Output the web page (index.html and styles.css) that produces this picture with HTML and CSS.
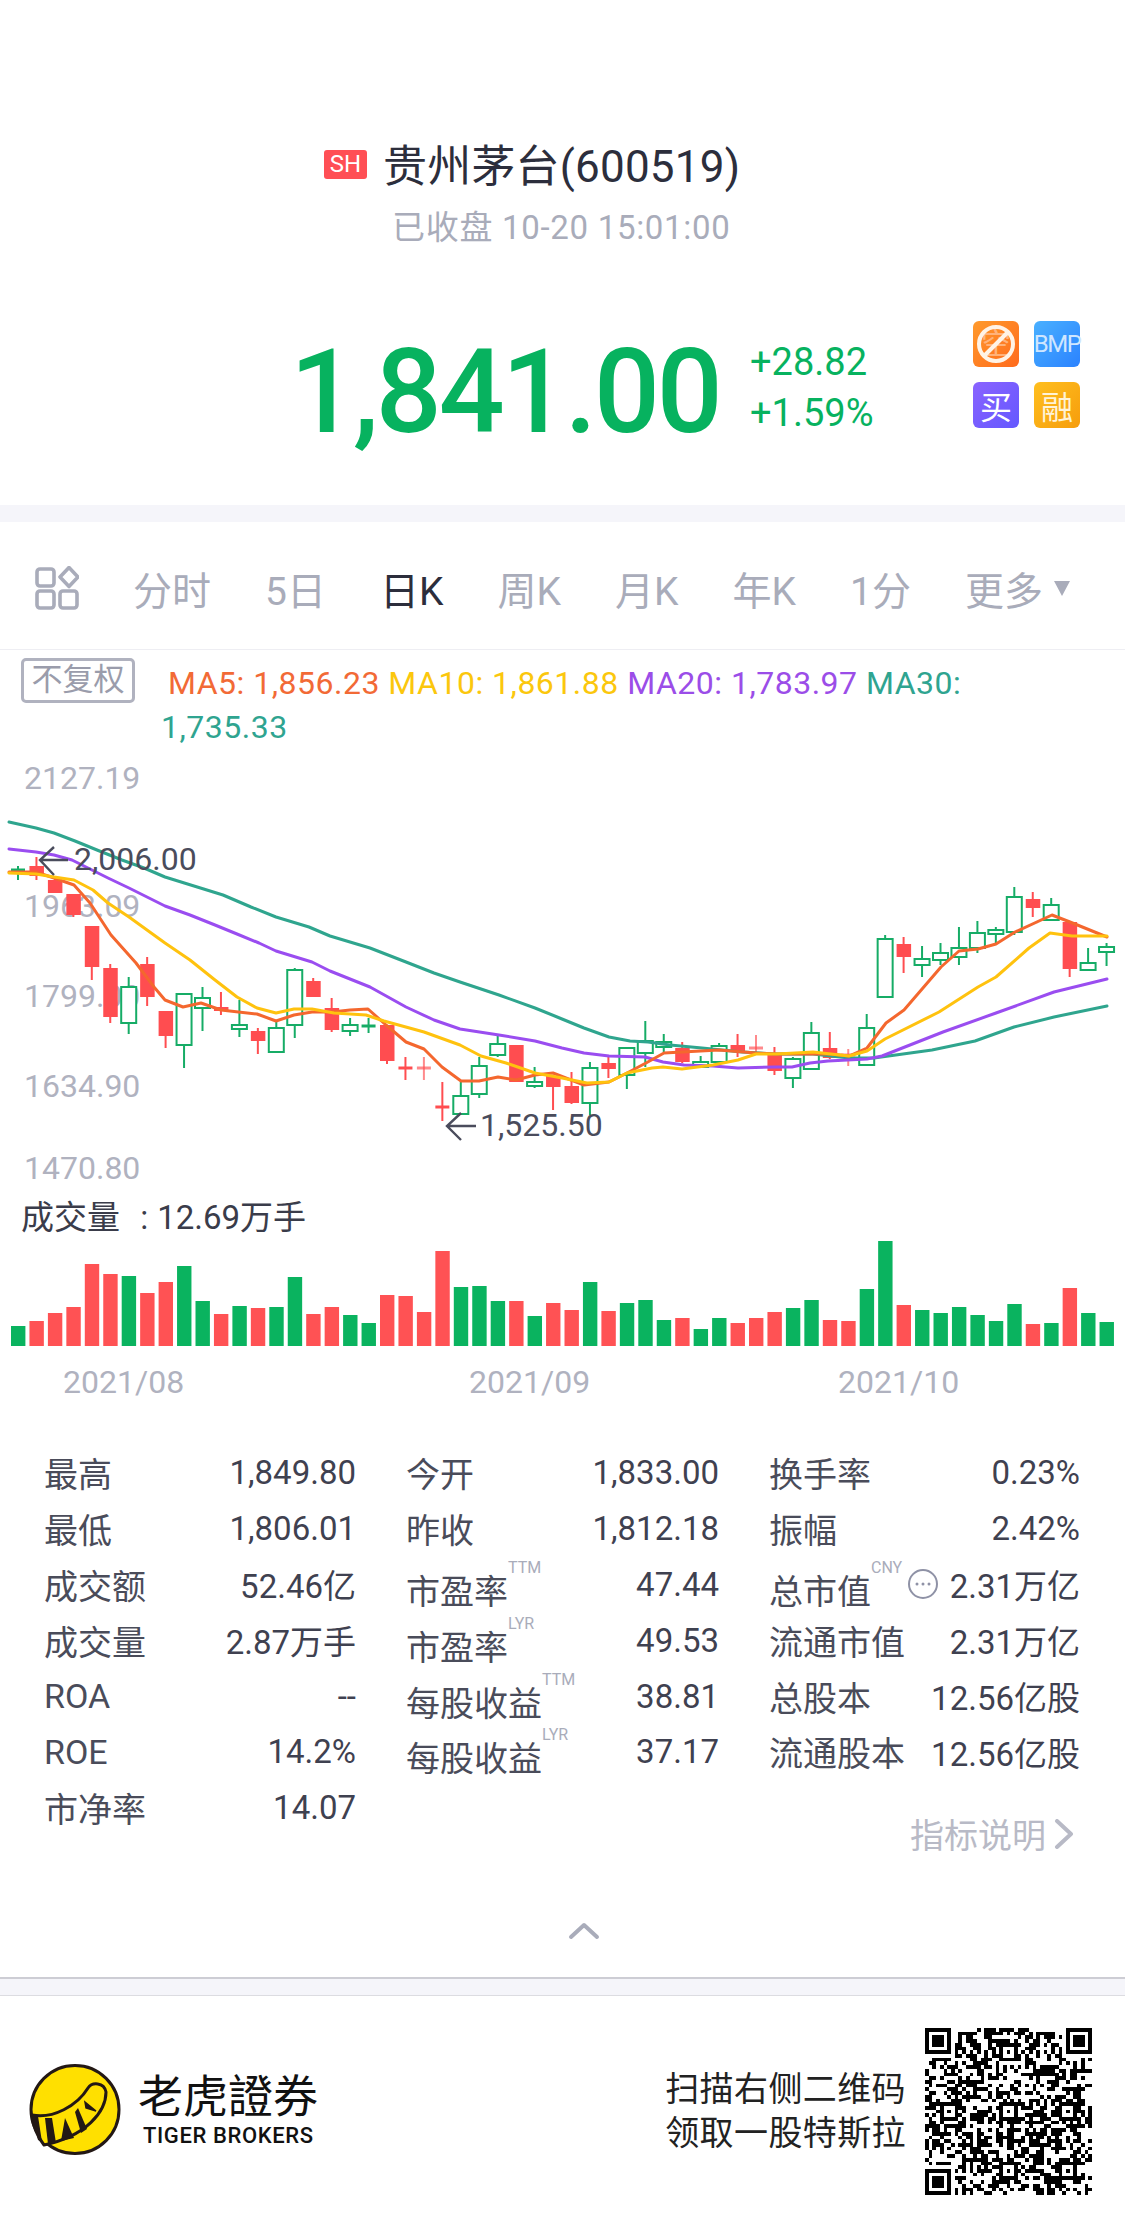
FILE: index.html
```html
<!DOCTYPE html>
<html lang="zh">
  <head>
    <meta charset="utf-8" />
    <title>贵州茅台(600519)</title>
    <link rel="stylesheet" href="styles.css">
  </head>
  <body>
    <section class="quote">
      <div class="title">
        <span class="market">SH</span>
        <span class="name">贵州茅台(600519)</span>
      </div>
      <div class="status">已收盘 10-20 15:01:00</div>
      <div class="price-row">
        <div class="price">1,841.00</div>
        <div class="change">
          <div>+28.82</div>
          <div>+1.59%</div>
        </div>
        <div class="flags">
          <span class="flag flag-orange">
            <svg viewBox="0 0 46 46" width="46" height="46">
              <text x="23" y="33" text-anchor="middle" class="flag-kong">空</text>
              <circle cx="23" cy="23" r="17" fill="none" stroke="#fff3e6" stroke-width="4" />
              <path d="M11 35 L35 11" stroke="#fff3e6" stroke-width="4" />
            </svg>
          </span>
          <span class="flag flag-blue">BMP</span>
          <span class="flag flag-purple">买</span>
          <span class="flag flag-yellow">融</span>
        </div>
      </div>
    </section>

    <div class="band"></div>

    <nav class="tabs">
      <svg class="tab-icon" viewBox="0 0 44 44" width="44" height="44">
        <g fill="none" stroke="#a9acba" stroke-width="3.6" stroke-linejoin="round">
          <rect x="2" y="3" width="17" height="17" rx="3" />
          <rect x="2" y="25" width="17" height="17" rx="3" />
          <rect x="25" y="25" width="17" height="17" rx="3" />
          <path d="M34 1.5 L43 11 L34 20.5 L25 11 Z" />
        </g>
      </svg>
      <span class="tab">分时</span>
      <span class="tab">5日</span>
      <span class="tab active">日K</span>
      <span class="tab">周K</span>
      <span class="tab">月K</span>
      <span class="tab">年K</span>
      <span class="tab">1分</span>
      <span class="tab">更多<i class="caret"></i></span>
    </nav>

    <div class="legend">
      <span class="adjust">不复权</span>
      <p class="ma-list">
        <span class="ma5">MA5: 1,856.23</span>
        <span class="ma10">MA10: 1,861.88</span>
        <span class="ma20">MA20: 1,783.97</span>
        <span class="ma30">MA30: 1,735.33</span>
      </p>
    </div>

    <svg id="chart" class="chart" viewBox="0 750 1125 650" width="1125" height="650">
      <g class="axis">
        <text x="24" y="789">2127.19</text>
        <text x="24" y="917">1963.09</text>
        <text x="24" y="1007">1799.00</text>
        <text x="24" y="1097">1634.90</text>
        <text x="24" y="1179">1470.80</text>
      </g>
      <g id="candles"></g>
      <g id="lines" fill="none" stroke-width="3" stroke-linejoin="round" stroke-linecap="round"></g>
      <g class="mark">
        <path d="M68 860 H40 M54 847 L40 860 L54 875" />
        <text x="74" y="870">2,006.00</text>
        <path d="M476 1126 H447 M461 1113 L447 1126 L461 1140" />
        <text x="480" y="1136">1,525.50</text>
      </g>
      <text class="vol-title" x="21" y="1229">成交量 <tspan dx="12">:</tspan><tspan dx="9">12.69万手</tspan></text>
      <g id="volume"></g>
      <g class="axis">
        <text x="63" y="1393">2021/08</text>
        <text x="469" y="1393">2021/09</text>
        <text x="838" y="1393">2021/10</text>
      </g>
    </svg>

    <section class="stats">
      <div class="cell"><span class="label">最高</span><span>1,849.80</span></div>
      <div class="cell"><span class="label">今开</span><span>1,833.00</span></div>
      <div class="cell"><span class="label">换手率</span><span>0.23%</span></div>

      <div class="cell"><span class="label">最低</span><span>1,806.01</span></div>
      <div class="cell"><span class="label">昨收</span><span>1,812.18</span></div>
      <div class="cell"><span class="label">振幅</span><span>2.42%</span></div>

      <div class="cell"><span class="label">成交额</span><span>52.46亿</span></div>
      <div class="cell"><span class="label low">市盈率<sup>TTM</sup></span><span>47.44</span></div>
      <div class="cell">
        <span class="label low">总市值<sup>CNY</sup></span>
        <svg class="more-dots" viewBox="0 0 32 32" width="32" height="32">
          <circle cx="16" cy="16" r="14" fill="none" stroke="#8f92a6" stroke-width="2" />
          <circle cx="10" cy="16" r="1.5" fill="#8f92a6" />
          <circle cx="16" cy="16" r="1.5" fill="#8f92a6" />
          <circle cx="22" cy="16" r="1.5" fill="#8f92a6" />
        </svg>
        <span>2.31万亿</span>
      </div>

      <div class="cell"><span class="label">成交量</span><span>2.87万手</span></div>
      <div class="cell"><span class="label low">市盈率<sup>LYR</sup></span><span>49.53</span></div>
      <div class="cell"><span class="label">流通市值</span><span>2.31万亿</span></div>

      <div class="cell"><span class="label">ROA</span><span>--</span></div>
      <div class="cell"><span class="label low">每股收益<sup>TTM</sup></span><span>38.81</span></div>
      <div class="cell"><span class="label">总股本</span><span>12.56亿股</span></div>

      <div class="cell"><span class="label">ROE</span><span>14.2%</span></div>
      <div class="cell"><span class="label low">每股收益<sup>LYR</sup></span><span>37.17</span></div>
      <div class="cell"><span class="label">流通股本</span><span>12.56亿股</span></div>

      <div class="cell"><span class="label">市净率</span><span>14.07</span></div>
      <div class="help">
        指标说明
        <svg viewBox="0 0 20 30" width="20" height="30">
          <path d="M3 2 L17 15 L3 28" fill="none" stroke="#b8bac6" stroke-width="4" stroke-linecap="round" stroke-linejoin="round" />
        </svg>
      </div>
    </section>

    <div class="collapse">
      <svg viewBox="0 0 32 18" width="32" height="18">
        <path d="M3 15 L16 3 L29 15" fill="none" stroke="#a9acba" stroke-width="4" stroke-linecap="round" stroke-linejoin="round" />
      </svg>
    </div>

    <div class="band band-lined"></div>

    <footer class="promo">
      <svg class="logo" viewBox="0 0 110 110" width="110" height="110">
        <circle cx="55" cy="53.5" r="44" fill="#ffe000" stroke="#231815" stroke-width="3" />
        <path d="M12 59 C33 63 57 50 68 32 C72 26 84 26 86 36 C86 56 66 80 24 89 C17 80 13 70 12 59 Z" fill="#ffe000" stroke="#231815" stroke-width="3" stroke-linejoin="round" />
        <path d="M12 59 L18 60 L22 86 L18 84 Z" fill="#231815" />
        <path d="M25 62 L32 62 L36 87 L28 88 Z" fill="#231815" />
        <path d="M45 62 L54 82 L41 85 Z" fill="#231815" />
        <path d="M58 52 L67 73 L61 77 L55 56 Z" fill="#231815" />
        <path d="M65 46 L76 55 L66 52 Z" fill="#231815" stroke="#231815" stroke-width="1.5" />
      </svg>
      <div class="brand">
        <div class="brand-cn">老虎證券</div>
        <div class="brand-en">TIGER BROKERS</div>
      </div>
      <div class="promo-text">
        <div>扫描右侧二维码</div>
        <div>领取一股特斯拉</div>
      </div>
      <svg id="qr" class="qr" viewBox="0 0 45 45" width="167" height="167" shape-rendering="crispEdges"></svg>
    </footer>

    <script src="chart.js"></script>
  </body>
</html>
```

FILE: styles.css
```css
* {
  box-sizing: border-box;
}

body {
  margin: 0;
  width: 1125px;
  background-color: #fff;
  color: #4a4c5a;
  font-family: Roboto, "Noto Sans CJK SC", sans-serif;
  font-size: 32px;
  overflow-x: hidden;
}

.quote {
  height: 505px;
  padding-top: 139px;
}

.title {
  display: flex;
  align-items: center;
  padding-left: 324px;
  height: 56px;
}

.market {
  width: 43px;
  height: 29px;
  margin-right: 16px;
  margin-bottom: 5px;
  background-color: #ff4f55;
  border-radius: 3px;
  color: #fff;
  font-size: 24px;
  line-height: 29px;
  text-align: center;
}

.name {
  color: #2c2e3c;
  font-size: 44px;
  letter-spacing: 0.2px;
  line-height: 56px;
}

.status {
  margin-top: 12px;
  padding-left: 392px;
  color: #a9acba;
  font-size: 33px;
  letter-spacing: 0.7px;
  line-height: 42px;
}

.price-row {
  display: flex;
  align-items: flex-start;
  margin-top: 72px;
  padding-left: 290px;
}

.price {
  width: 460px;
  margin-top: 13px;
  color: #07b25f;
  font-size: 116px;
  font-weight: 500;
  letter-spacing: -3px;
  line-height: 116px;
}

.change {
  margin-top: 16px;
  color: #07b25f;
  font-size: 38px;
  line-height: 51px;
}

.flags {
  display: grid;
  grid-template-columns: 46px 46px;
  gap: 15px;
  margin-left: auto;
  margin-right: 45px;
}

.flag {
  display: flex;
  align-items: center;
  justify-content: center;
  height: 46px;
  border-radius: 6px;
  color: #fff;
  font-size: 32px;
}

.flag-orange {
  background: linear-gradient(135deg, #ff9a2c, #ff6a1c);
}

.flag-kong {
  fill: #ffb27a;
  font-size: 30px;
}

.flag-blue {
  background: linear-gradient(135deg, #49b0ff, #2b82ff);
  color: #cfe6ff;
  font-size: 24px;
  letter-spacing: -1.5px;
}

.flag-purple {
  background: linear-gradient(135deg, #8a63ff, #6458ff);
}

.flag-yellow {
  background: linear-gradient(135deg, #ffbf1f, #f69d0c);
  color: #fff3d6;
}

.band {
  height: 17px;
  background-color: #f5f5fa;
}

.band-lined {
  height: 19px;
  border-top: 2px solid #cdcdd4;
  border-bottom: 1px solid #dcdce1;
}

.tabs {
  display: flex;
  align-items: center;
  justify-content: space-between;
  height: 128px;
  padding: 5px 55px 0 35px;
  border-bottom: 1px solid #eeeef3;
}

.tab {
  display: flex;
  align-items: center;
  color: #a9acba;
  font-size: 39px;
}

.tab.active {
  color: #2c2e3c;
}

.caret {
  width: 0;
  height: 0;
  margin-left: 11px;
  border-top: 15px solid #a9acba;
  border-left: 8px solid transparent;
  border-right: 8px solid transparent;
}

.legend {
  display: flex;
  align-items: flex-start;
  height: 100px;
  padding: 8px 150px 0 21px;
}

.adjust {
  width: 114px;
  height: 45px;
  border: 3px solid #b0b2bf;
  border-radius: 5px;
  color: #9a9cab;
  font-size: 31px;
  line-height: 38px;
  text-align: center;
}

.ma-list {
  flex: 1;
  margin: 3px 0 0 26px;
  letter-spacing: 0.5px;
  line-height: 44px;
  text-indent: 7px;
}

.ma5 {
  color: #f26a36;
}

.ma10 {
  color: #fbc70d;
}

.ma20 {
  color: #9b4de8;
}

.ma30 {
  color: #2fa490;
}

.chart {
  display: block;
}

.axis text {
  fill: #b0b2bf;
  font-size: 32px;
}

.mark path {
  fill: none;
  stroke: #4a4c5c;
  stroke-width: 2.4;
}

.mark text {
  fill: #4a4c5c;
  font-size: 32px;
}

.vol-title {
  fill: #3a3c4a;
  font-size: 33px;
}

.stats {
  display: grid;
  grid-template-columns: 312px 313px 311px;
  grid-auto-rows: 55.8px;
  column-gap: 50px;
  margin-top: 45px;
  padding-left: 44px;
}

.cell {
  display: flex;
  align-items: center;
  justify-content: space-between;
  color: #3f4150;
  font-size: 33px;
}

.label {
  position: relative;
  color: #4a4c5a;
  font-size: 34px;
}

.label.low {
  margin-top: 10px;
}

.label sup {
  position: absolute;
  left: 100%;
  top: -5px;
  color: #a9acba;
  font-size: 16px;
  line-height: 16px;
}

.more-dots {
  margin-left: auto;
  margin-right: 11px;
}

.help {
  grid-column: 3;
  display: flex;
  align-items: center;
  justify-content: flex-end;
  gap: 8px;
  height: 40px;
  margin-top: 34px;
  padding-right: 6px;
  color: #b8bac6;
  font-size: 34px;
}

.collapse {
  display: flex;
  justify-content: center;
  height: 141px;
  padding: 86px 0 0 42px;
}

.promo {
  display: flex;
  align-items: center;
  height: 231px;
  padding-right: 33px;
}

.logo {
  margin-left: 20px;
}

.brand {
  margin-left: 8px;
  color: #111;
}

.brand-cn {
  font-size: 45px;
  line-height: 50px;
}

.brand-en {
  font-size: 22px;
  font-weight: 500;
  letter-spacing: 0.6px;
  line-height: 26px;
  padding-left: 5px;
}

.promo-text {
  margin-left: auto;
  color: #222;
  font-size: 34px;
  letter-spacing: 0.4px;
  line-height: 44px;
}

.qr {
  margin-left: 19px;
}
```

FILE: chart.js
```js
var NS = "http://www.w3.org/2000/svg";

function add(parent, tag, attrs) {
  var el = document.createElementNS(NS, tag);
  for (var k in attrs) el.setAttribute(k, attrs[k]);
  parent.appendChild(el);
  return el;
}

// wick top, body top, body bottom, wick bottom (page y), type
// r = red, g = green outline, x = cross, l = pale cross
var candles = [
  [866, 870, 873, 880, "gx"], [857, 866, 876, 880, "r"], [877, 880, 893, 893, "r"],
  [894, 894, 915, 917, "r"], [926, 926, 967, 980, "r"], [964, 968, 1017, 1023, "r"],
  [977, 987, 1023, 1034, "g"], [957, 964, 997, 1006, "r"], [1011, 1011, 1036, 1048, "r"],
  [994, 994, 1045, 1068, "g"], [987, 998, 1008, 1031, "g"], [992, 1007, 1011, 1015, "r"],
  [1000, 1025, 1029, 1037, "g"], [1028, 1031, 1041, 1054, "r"], [1022, 1028, 1052, 1052, "g"],
  [968, 970, 1025, 1038, "g"], [978, 981, 997, 997, "r"], [998, 1008, 1030, 1032, "r"],
  [1018, 1025, 1031, 1036, "g"], [1018, 1026, 1027, 1033, "gx"], [1025, 1025, 1061, 1064, "r"],
  [1057, 1068, 1068, 1080, "x"], [1057, 1068, 1068, 1080, "l"], [1082, 1107, 1107, 1121, "x"],
  [1082, 1096, 1114, 1114, "g"], [1057, 1066, 1094, 1098, "g"], [1035, 1044, 1055, 1057, "g"],
  [1045, 1045, 1082, 1082, "r"], [1067, 1082, 1086, 1088, "g"], [1076, 1076, 1087, 1110, "r"],
  [1072, 1086, 1103, 1104, "r"], [1062, 1068, 1103, 1115, "g"], [1057, 1063, 1069, 1078, "r"],
  [1048, 1048, 1075, 1089, "g"], [1021, 1041, 1053, 1067, "g"], [1034, 1042, 1047, 1052, "g"],
  [1042, 1048, 1062, 1063, "r"], [1056, 1062, 1067, 1067, "g"], [1043, 1046, 1062, 1062, "g"],
  [1034, 1045, 1052, 1057, "r"], [1035, 1048, 1048, 1052, "l"], [1047, 1054, 1071, 1075, "r"],
  [1057, 1059, 1078, 1088, "g"], [1022, 1033, 1069, 1069, "g"], [1032, 1048, 1058, 1059, "r"],
  [1049, 1055, 1055, 1066, "l"], [1014, 1028, 1065, 1065, "g"], [935, 939, 997, 997, "g"],
  [937, 944, 957, 973, "r"], [946, 959, 965, 977, "g"], [943, 953, 960, 965, "g"],
  [927, 948, 957, 965, "g"], [921, 933, 948, 953, "g"], [927, 930, 934, 943, "g"],
  [887, 897, 932, 935, "g"], [892, 899, 908, 917, "r"], [898, 905, 920, 920, "g"],
  [922, 922, 969, 977, "r"], [948, 963, 970, 970, "g"], [943, 947, 952, 966, "g"]
];

// top of each volume bar (page y), bars stand on y = 1346
var volume = [
  [1326, "g"], [1321, "r"], [1313, "r"], [1307, "r"], [1264, "r"], [1274, "r"], [1276, "g"], [1293, "r"],
  [1282, "r"], [1266, "g"], [1301, "g"], [1314, "r"], [1306, "g"], [1308, "r"], [1307, "g"], [1277, "g"],
  [1314, "r"], [1307, "r"], [1315, "g"], [1323, "g"], [1295, "r"], [1296, "r"], [1312, "r"], [1251, "r"],
  [1287, "g"], [1286, "g"], [1301, "g"], [1301, "r"], [1316, "g"], [1303, "r"], [1310, "r"], [1282, "g"],
  [1311, "r"], [1303, "g"], [1300, "g"], [1320, "g"], [1318, "r"], [1329, "g"], [1318, "g"], [1323, "r"],
  [1318, "r"], [1312, "r"], [1308, "g"], [1300, "g"], [1320, "r"], [1321, "r"], [1289, "g"], [1241, "g"],
  [1305, "r"], [1310, "g"], [1313, "g"], [1307, "g"], [1315, "g"], [1321, "g"], [1304, "g"], [1324, "r"],
  [1323, "g"], [1288, "r"], [1313, "g"], [1322, "g"]
];

// moving averages as page coordinates
var lines = {
  "#2fa58e": [[9, 822], [36, 828], [54, 833], [75, 841], [97, 850], [122, 860], [144, 868], [165, 877], [194, 886], [223, 895], [251, 907], [276, 917], [309, 927], [330, 936], [370, 948], [406, 962], [434, 973], [460, 982], [499, 995], [535, 1008], [562, 1019], [584, 1028], [609, 1037], [630, 1041], [648, 1042], [670, 1045], [702, 1048], [742, 1052], [777, 1054], [813, 1054], [849, 1058], [874, 1058], [932, 1050], [975, 1041], [1014, 1027], [1054, 1017], [1107, 1006]],
  "#9a4df0": [[9, 849], [36, 852], [54, 855], [72, 860], [86, 867], [108, 878], [129, 888], [147, 897], [165, 906], [190, 915], [215, 925], [237, 934], [259, 943], [276, 951], [312, 962], [330, 971], [370, 987], [406, 1007], [434, 1020], [460, 1029], [499, 1035], [535, 1041], [562, 1048], [584, 1053], [609, 1056], [645, 1057], [663, 1062], [684, 1065], [713, 1066], [738, 1068], [774, 1067], [792, 1067], [810, 1063], [828, 1061], [867, 1059], [882, 1056], [943, 1032], [996, 1013], [1054, 992], [1107, 979]],
  "#f4672e": [[9, 872], [36, 872], [54, 878], [74, 885], [90, 903], [111, 935], [136, 963], [154, 987], [165, 1000], [183, 1007], [201, 1003], [221, 1010], [257, 1014], [276, 1021], [294, 1015], [312, 1012], [332, 1012], [350, 1010], [368, 1009], [386, 1025], [406, 1042], [424, 1049], [442, 1067], [461, 1081], [479, 1081], [498, 1077], [516, 1080], [535, 1075], [553, 1073], [584, 1085], [609, 1082], [627, 1073], [646, 1063], [664, 1053], [682, 1052], [719, 1050], [756, 1053], [775, 1054], [813, 1054], [830, 1054], [849, 1056], [867, 1048], [886, 1023], [904, 1010], [941, 967], [959, 951], [978, 949], [996, 944], [1015, 932], [1052, 915], [1070, 922], [1107, 937]],
  "#ffc20e": [[9, 873], [36, 874], [54, 877], [74, 880], [93, 890], [108, 903], [129, 917], [147, 930], [165, 943], [190, 960], [215, 980], [237, 997], [257, 1008], [276, 1013], [294, 1009], [312, 1009], [334, 1013], [366, 1015], [384, 1021], [424, 1032], [460, 1045], [481, 1056], [506, 1063], [535, 1073], [562, 1078], [587, 1083], [609, 1082], [627, 1073], [652, 1068], [663, 1067], [682, 1069], [713, 1065], [738, 1060], [756, 1054], [777, 1054], [813, 1052], [849, 1056], [867, 1051], [885, 1039], [939, 1012], [978, 987], [996, 977], [1029, 948], [1050, 933], [1072, 936], [1107, 936]]
};

var candleGroup = document.getElementById("candles");
candles.forEach(function (c, i) {
  var x = 18 + 18.45 * i;
  var type = c[4];
  var isRed = type === "r" || type === "x" || type === "l";
  var color = isRed ? "#ff4d50" : "#16ac66";
  var opacity = type === "l" ? 0.65 : 1;
  add(candleGroup, "path", {
    d: "M" + x + " " + c[0] + "V" + c[3],
    stroke: color,
    "stroke-width": 2,
    opacity: opacity
  });
  if (type === "r") {
    add(candleGroup, "rect", { x: x - 7, y: c[1], width: 14.5, height: c[2] - c[1], fill: color });
  } else if (type === "g") {
    add(candleGroup, "rect", {
      x: x - 7.5, y: c[1], width: 15, height: c[2] - c[1],
      fill: "#fff", stroke: color, "stroke-width": 2
    });
  } else {
    add(candleGroup, "path", {
      d: "M" + (x - 7) + " " + c[1] + "H" + (x + 7),
      stroke: color,
      "stroke-width": 3,
      opacity: opacity
    });
  }
});

var lineGroup = document.getElementById("lines");
Object.keys(lines).forEach(function (color) {
  add(lineGroup, "polyline", { points: lines[color].join(" "), stroke: color });
});

var volumeGroup = document.getElementById("volume");
volume.forEach(function (v, i) {
  add(volumeGroup, "rect", {
    x: 11 + 18.45 * i,
    y: v[0],
    width: 14.4,
    height: 1346 - v[0],
    fill: v[1] === "r" ? "#ff5254" : "#0ab35f"
  });
});

// qr code: fixed patterns plus seeded noise
var size = 45;
var seed = 519;
function next() {
  seed = (seed * 1103515245 + 12345) & 0x7fffffff;
  return (seed >> 16) / 32767;
}
function inBox(x, y, bx, by, s) {
  return x >= bx && x < bx + s && y >= by && y < by + s;
}
function pattern(x, y, cx, cy, r) {
  var d = Math.max(Math.abs(x - cx), Math.abs(y - cy));
  return r === 3 ? d !== 2 : d !== 1;
}
var finders = [[3, 3], [41, 3], [3, 41]];
var aligns = [[6, 22], [22, 6], [22, 22], [38, 22], [22, 38], [38, 38]];
var d = "";
for (var y = 0; y < size; y++) {
  for (var x = 0; x < size; x++) {
    var on = next() > 0.5;
    if (y === 6 || x === 6) on = (x + y) % 2 === 0;
    aligns.forEach(function (a) {
      if (inBox(x, y, a[0] - 2, a[1] - 2, 5)) on = pattern(x, y, a[0], a[1], 2);
    });
    finders.forEach(function (f) {
      if (inBox(x, y, f[0] - 4, f[1] - 4, 9)) {
        var dist = Math.max(Math.abs(x - f[0]), Math.abs(y - f[1]));
        on = dist < 4 && dist !== 2;
      }
    });
    if (on) d += "M" + x + " " + y + "h1v1h-1z";
  }
}
add(document.getElementById("qr"), "path", { d: d, fill: "#000" });
```
